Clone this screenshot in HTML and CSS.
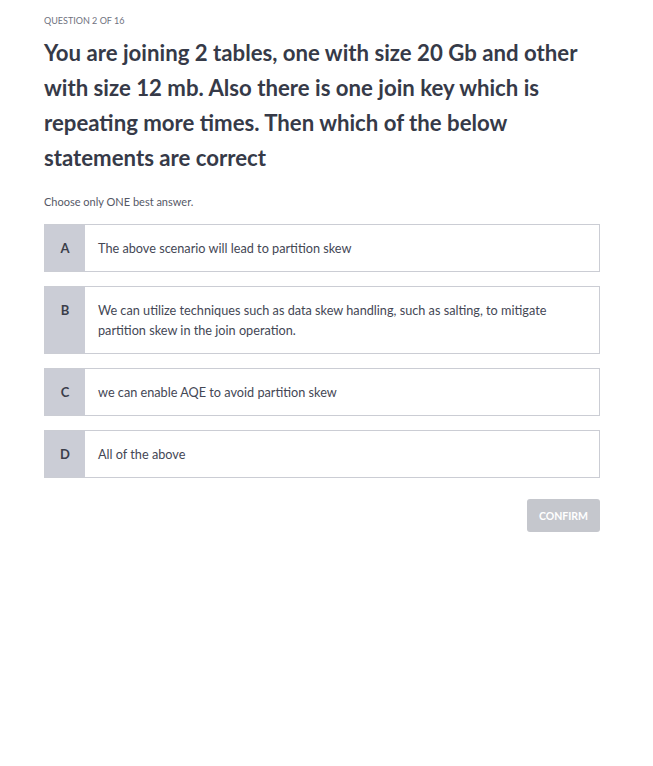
FILE: index.html
```html
<!DOCTYPE html>
<html>
<head>
<meta charset="utf-8">
<link rel="stylesheet" href="styles.css">
</head>
<body>
<div class="quiz">
  <div class="counter">QUESTION 2 OF 16</div>
  <h1 class="question">You are joining 2 tables, one with size 20 Gb and other with size 12 mb. Also there is one join key which is repeating more times. Then which of the below statements are correct</h1>
  <div class="hint">Choose only ONE best answer.</div>
  <div class="options">
    <div class="option"><div class="letter">A</div><div class="text">The above scenario will lead to partition skew</div></div>
    <div class="option"><div class="letter">B</div><div class="text">We can utilize techniques such as data skew handling, such as salting, to mitigate partition skew in the join operation.</div></div>
    <div class="option"><div class="letter">C</div><div class="text">we can enable AQE to avoid partition skew</div></div>
    <div class="option"><div class="letter">D</div><div class="text">All of the above</div></div>
  </div>
  <div class="actions"><button class="confirm">CONFIRM</button></div>
</div>
</body>
</html>
```
FILE: styles.css
```css
html, body { margin: 0; padding: 0; background: #fff; }
body { font-family: Lato, "Open Sans", sans-serif; color: #3b3e4a; }
.quiz { padding: 14px 53px 0 44px; }
.counter { font-size: 9px; color: #6f7280; line-height: 14px; }
.question { margin: 7px 0 0 0; font-size: 22.2px; font-weight: 700; line-height: 35px; color: #363a48; }
.hint { margin-top: 19px; font-size: 11px; line-height: 16px; color: #555866; }
.options { margin-top: 14px; display: flex; flex-direction: column; gap: 14px; }
.option { display: flex; border: 1px solid #cbcdd4; }
.letter { width: 40px; flex: none; background: #cbcdd6; padding-top: 13px; text-align: center; font-size: 13px; line-height: 20px; font-weight: 700; color: #3b3e4a; }
.text { flex: 1; padding: 13px 40px 13px 13px; font-size: 12.7px; line-height: 20px; color: #444755; }
.actions { display: flex; justify-content: flex-end; margin-top: 21px; }
.confirm { border: none; background: #c5c7cd; color: #fff; font-family: Lato, sans-serif; font-weight: 700; font-size: 10.5px; width: 73px; height: 33px; border-radius: 3px; padding: 0; }
```
